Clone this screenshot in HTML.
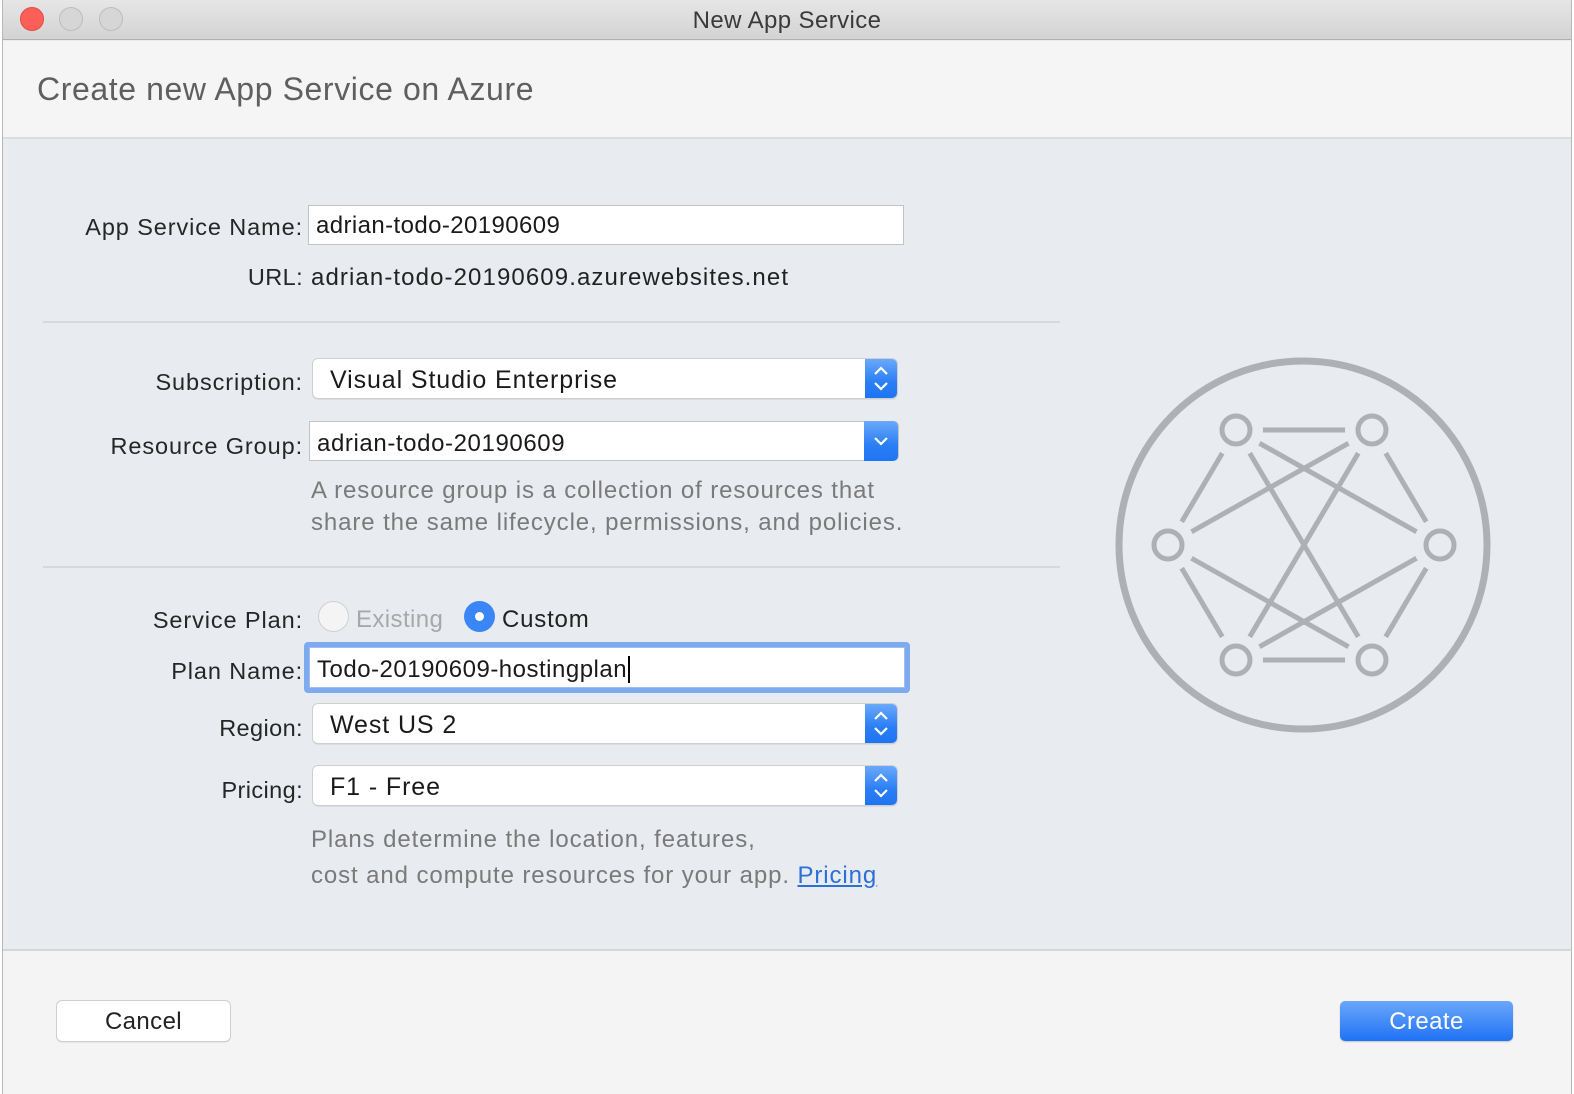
<!DOCTYPE html>
<html><head><meta charset="utf-8"><style>
*{margin:0;padding:0;box-sizing:border-box}
body{width:1574px;height:1094px;overflow:hidden;background:#fff;font-family:"Liberation Sans",sans-serif;position:relative;letter-spacing:0.4px}
.a{position:absolute}
#win{position:absolute;left:2px;top:0;width:1570px;height:1094px;background:#e8ebef;border-left:1px solid #b8b8b8;border-right:1px solid #b8b8b8}
#tb{position:absolute;left:0;top:0;width:100%;height:40px;background:linear-gradient(#e6e6e6,#d3d3d3);border-bottom:1px solid #b0b0b0;text-align:center;font-size:24px;line-height:42px;color:#3a3a3a}
.dot{position:absolute;top:7px;width:24px;height:24px;border-radius:50%}
#hd{position:absolute;left:0;top:41px;width:100%;height:98px;background:#f5f5f5;border-bottom:2px solid #dcdcdc}
#ft{position:absolute;left:0;top:949px;width:100%;height:145px;background:#f4f4f4;border-top:2px solid #d6d6d6}
.lbl{position:absolute;font-size:23.5px;color:#262626;text-align:right;width:300px;left:0}
.txt{font-size:24px;color:#222}
.field{position:absolute;background:#fff;border:1px solid #c3c3c3;font-size:24px;color:#1a1a1a;padding-left:7px;line-height:40px}
.pop{position:absolute;background:#fff;border-radius:5px;box-shadow:0 0 0 1px #cfcfcf,0 1px 1.5px rgba(0,0,0,.25);font-size:25px;color:#1a1a1a;padding-left:17px;line-height:42px}
.arr{position:absolute;right:0;top:0;width:32px;height:100%;background:linear-gradient(#6aa9fb,#2a7ef5 60%,#1f74f2);border-radius:0 5px 5px 0}
.hr{position:absolute;left:40px;width:1017px;height:2px;background:#d6d8dc}
.help{position:absolute;left:308px;font-size:24px;color:#7a7a7a;line-height:32px;letter-spacing:0.9px}
</style></head><body>
<div id="win">
<div id="tb">New App Service
<div class="dot" style="left:17px;background:#fc5f57;border:1px solid #de4a42"></div>
<div class="dot" style="left:56px;background:#d6d6d6;border:1px solid #bdbdbd"></div>
<div class="dot" style="left:96px;background:#d6d6d6;border:1px solid #bdbdbd"></div>
</div>
<div id="hd"><div class="a" style="left:34px;top:30px;font-size:32px;color:#5f5f5f;letter-spacing:0.6px">Create new App Service on Azure</div></div>

<div class="lbl" style="top:214px;letter-spacing:0.9px">App Service Name:</div>
<div class="field" style="left:305px;top:205px;width:596px;height:40px">adrian-todo-20190609</div>
<div class="lbl" style="top:264px">URL:</div>
<div class="a txt" style="left:308px;top:264px;letter-spacing:1.1px">adrian-todo-20190609.azurewebsites.net</div>
<div class="hr" style="top:321px"></div>

<div class="lbl" style="top:369px;letter-spacing:0.9px">Subscription:</div>
<div class="pop" style="left:310px;top:359px;width:584px;height:39px;letter-spacing:0.9px">Visual Studio Enterprise<div class="arr"><svg width="32" height="39" viewBox="0 0 32 39"><path d="M10 15 L16 9 L22 15 M10 24 L16 30 L22 24" fill="none" stroke="#fff" stroke-width="2.2"/></svg></div></div>

<div class="lbl" style="top:433px;letter-spacing:0.9px">Resource Group:</div>
<div class="field" style="left:306px;top:421px;width:590px;height:40px;border-radius:0 5px 5px 0;line-height:44px;letter-spacing:0.6px">adrian-todo-20190609<div class="arr" style="width:34px;top:-1px;height:40px"><svg width="34" height="40" viewBox="0 0 34 40"><path d="M11 17 L17 23 L23 17" fill="none" stroke="#fff" stroke-width="2.2"/></svg></div></div>
<div class="help" style="top:475px">A resource group is a collection of resources that<br>share the same lifecycle, permissions, and policies.</div>
<div class="hr" style="top:566px"></div>

<div class="lbl" style="top:607px;letter-spacing:0.9px">Service Plan:</div>
<div class="a" style="left:315px;top:601px;width:31px;height:31px;border-radius:50%;background:#f4f4f4;border:1px solid #d0d0d0"></div>
<div class="a" style="left:353px;top:606px;font-size:24px;color:#a8a8a8">Existing</div>
<div class="a" style="left:461px;top:601px;width:31px;height:31px;border-radius:50%;background:#3b86f7"><div class="a" style="left:11px;top:11px;width:9px;height:9px;border-radius:50%;background:#fff"></div></div>
<div class="a" style="left:499px;top:606px;font-size:24px;color:#222;letter-spacing:0.8px">Custom</div>

<div class="lbl" style="top:658px;letter-spacing:0.9px">Plan Name:</div>
<div class="a" style="left:301px;top:642px;width:606px;height:51px;border-radius:4px;background:#7eaaf0"></div>
<div class="field" style="left:306px;top:647px;width:596px;height:41px;border-color:#9fbff2;line-height:44px;letter-spacing:0.5px">Todo-20190609-hostingplan<span style="border-left:2px solid #000;margin-left:1px"></span></div>

<div class="lbl" style="top:715px">Region:</div>
<div class="pop" style="left:310px;top:704px;width:584px;height:39px;letter-spacing:0.9px">West US 2<div class="arr"><svg width="32" height="39" viewBox="0 0 32 39"><path d="M10 15 L16 9 L22 15 M10 24 L16 30 L22 24" fill="none" stroke="#fff" stroke-width="2.2"/></svg></div></div>

<div class="lbl" style="top:777px">Pricing:</div>
<div class="pop" style="left:310px;top:766px;width:584px;height:39px;letter-spacing:0.9px">F1 - Free<div class="arr"><svg width="32" height="39" viewBox="0 0 32 39"><path d="M10 15 L16 9 L22 15 M10 24 L16 30 L22 24" fill="none" stroke="#fff" stroke-width="2.2"/></svg></div></div>
<div class="help" style="top:822px;line-height:36px">Plans determine the location, features,<br>cost and compute resources for your app. <span style="color:#2b6fd8;text-decoration:underline">Pricing</span></div>

<svg class="a" style="left:1098px;top:340px" width="420" height="420" viewBox="1098 340 420 420">
<g stroke="#aeb0b3" stroke-width="5" fill="none">
<circle cx="1300" cy="545" r="184" stroke-width="7"/>
<line x1="1233" y1="430" x2="1369" y2="430"/>
<line x1="1233" y1="660" x2="1369" y2="660"/>
<line x1="1233" y1="430" x2="1165" y2="545"/>
<line x1="1165" y1="545" x2="1233" y2="660"/>
<line x1="1369" y1="430" x2="1437" y2="545"/>
<line x1="1437" y1="545" x2="1369" y2="660"/>
<line x1="1233" y1="430" x2="1369" y2="660"/>
<line x1="1233" y1="430" x2="1437" y2="545"/>
<line x1="1369" y1="430" x2="1165" y2="545"/>
<line x1="1369" y1="430" x2="1233" y2="660"/>
<line x1="1165" y1="545" x2="1369" y2="660"/>
<line x1="1437" y1="545" x2="1233" y2="660"/>
</g>
<g fill="#e8ebef">
<circle cx="1233" cy="430" r="27"/><circle cx="1369" cy="430" r="27"/><circle cx="1165" cy="545" r="27"/><circle cx="1437" cy="545" r="27"/><circle cx="1233" cy="660" r="27"/><circle cx="1369" cy="660" r="27"/>
</g>
<g fill="none" stroke="#aeb0b3" stroke-width="5">
<circle cx="1233" cy="430" r="14"/><circle cx="1369" cy="430" r="14"/><circle cx="1165" cy="545" r="14"/><circle cx="1437" cy="545" r="14"/><circle cx="1233" cy="660" r="14"/><circle cx="1369" cy="660" r="14"/>
</g>
</svg>

<div id="ft">
<div class="a" style="left:54px;top:50px;width:173px;height:40px;background:#fff;border-radius:5px;box-shadow:0 0 0 1px #cfcfcf,0 1px 1.5px rgba(0,0,0,.25);text-align:center;line-height:42px;font-size:24px;color:#222">Cancel</div>
<div class="a" style="left:1337px;top:50px;width:173px;height:40px;background:linear-gradient(#6aa7fa,#1f72f5);border-radius:5px;box-shadow:0 1px 1.5px rgba(0,0,0,.2);text-align:center;line-height:42px;font-size:24px;color:#fff">Create</div>
</div>
</div>
</body></html>
